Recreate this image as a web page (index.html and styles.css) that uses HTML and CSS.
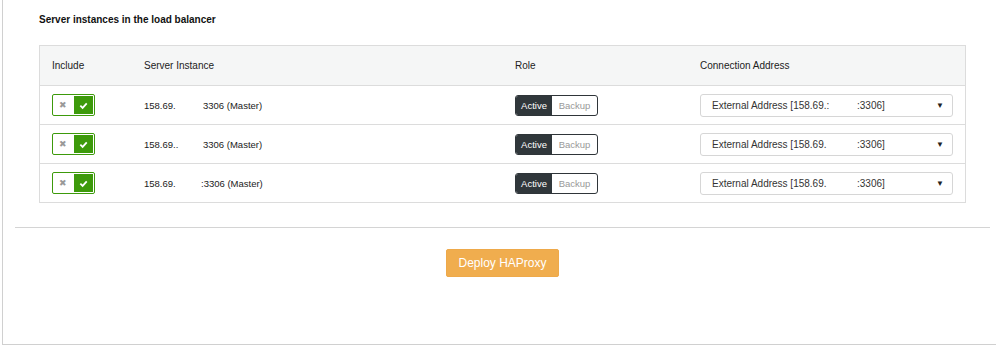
FILE: index.html
```html
<!DOCTYPE html>
<html>
<head>
<meta charset="utf-8">
<link rel="stylesheet" href="styles.css">
</head>
<body>
<div class="panel">
  <div class="section">
    <h4 class="title">Server instances in the load balancer</h4>
    <table class="grid">
      <thead>
        <tr>
          <th class="c1">Include</th>
          <th class="c2">Server Instance</th>
          <th class="c3">Role</th>
          <th class="c4">Connection Address</th>
        </tr>
      </thead>
      <tbody>
        <tr>
          <td><div class="sw"><span class="off">✖</span><span class="on"><svg viewBox="0 0 10 10" width="9" height="9"><path d="M1.5 5.2 L4 7.6 L8.6 2.6" fill="none" stroke="#fff" stroke-width="2"/></svg></span></div></td>
          <td><span class="ip">158.69.</span><span>3306 (Master)</span></td>
          <td><div class="role"><span class="act">Active</span><span class="bak">Backup</span></div></td>
          <td><div class="sel"><span class="a1">External Address [158.69.:</span><span>:3306]</span><span class="arr">▼</span></div></td>
        </tr>
        <tr>
          <td><div class="sw"><span class="off">✖</span><span class="on"><svg viewBox="0 0 10 10" width="9" height="9"><path d="M1.5 5.2 L4 7.6 L8.6 2.6" fill="none" stroke="#fff" stroke-width="2"/></svg></span></div></td>
          <td><span class="ip">158.69..</span><span>3306 (Master)</span></td>
          <td><div class="role"><span class="act">Active</span><span class="bak">Backup</span></div></td>
          <td><div class="sel"><span class="a1">External Address [158.69.</span><span>:3306]</span><span class="arr">▼</span></div></td>
        </tr>
        <tr>
          <td><div class="sw"><span class="off">✖</span><span class="on"><svg viewBox="0 0 10 10" width="9" height="9"><path d="M1.5 5.2 L4 7.6 L8.6 2.6" fill="none" stroke="#fff" stroke-width="2"/></svg></span></div></td>
          <td><span class="ip ip3">158.69.</span><span>:3306 (Master)</span></td>
          <td><div class="role"><span class="act">Active</span><span class="bak">Backup</span></div></td>
          <td><div class="sel"><span class="a1">External Address [158.69.</span><span>:3306]</span><span class="arr">▼</span></div></td>
        </tr>
      </tbody>
    </table>
  </div>
  <hr class="rule">
  <div class="actions">
    <button class="deploy">Deploy HAProxy</button>
  </div>
</div>
</body>
</html>
```

FILE: styles.css
```css
html, body {
  margin: 0;
  padding: 0;
  background: #fff;
  font-family: "Liberation Sans", Arial, sans-serif;
  color: #222;
}
.panel {
  margin-left: 2px;
  height: 344px;
  border-left: 1px solid #d0d0d0;
  border-bottom: 1px solid #d0d0d0;
  box-sizing: content-box;
}
.section {
  padding: 14px 30px 0 36px;
}
.title {
  margin: 0 0 19px 0;
  font-size: 10px;
  font-weight: bold;
  line-height: 12px;
  color: #111;
}
.grid {
  width: 927px;
  border-collapse: collapse;
  border: 1px solid #dcdcdc;
  font-size: 10px;
}
.grid th {
  background: #f5f6f6;
  font-weight: normal;
  text-align: left;
  height: 39px;
  padding: 0 0 0 12px;
  color: #222;
  border-bottom: 1px solid #dcdcdc;
}
.grid td {
  height: 38px;
  padding: 0 0 0 12px;
  border-bottom: 1px solid #dcdcdc;
  font-size: 9.5px;
  color: #222;
}
.c1 { width: 80px; }
.c2 { width: 359px; }
.c3 { width: 173px; }
.sw {
  display: flex;
  width: 41px;
  height: 20px;
  border: 1px solid #3d9a0b;
  border-radius: 2px;
}
.sw .off {
  width: 20px;
  display: flex;
  align-items: center;
  justify-content: center;
  color: #999;
  font-size: 9px;
}
.sw .on {
  flex: 1;
  margin: 1px;
  background: #3d9a0b;
  display: flex;
  align-items: center;
  justify-content: center;
}
.ip {
  display: inline-block;
  width: 59px;
}
.ip3 { width: 57px; }
.role {
  display: flex;
  width: 81px;
  height: 19px;
  border: 1px solid #2f3539;
  border-radius: 3px;
  box-sizing: content-box;
  overflow: hidden;
  font-size: 9.5px;
}
.role .act {
  width: 36px;
  background: #30373b;
  color: #fff;
  display: flex;
  align-items: center;
  justify-content: center;
}
.role .bak {
  flex: 1;
  color: #999;
  display: flex;
  align-items: center;
  justify-content: center;
}
.sel {
  display: flex;
  align-items: center;
  width: 253px;
  height: 23px;
  border: 1px solid #d6d6d6;
  border-radius: 3px;
  padding-left: 11px;
  box-sizing: border-box;
  font-size: 10px;
  color: #333;
}
.sel .a1 {
  width: 145px;
}
.sel .arr {
  margin-left: auto;
  margin-right: 8px;
  font-size: 8px;
  color: #222;
}
.rule {
  margin: 24px 6px 0 12px;
  border: 0;
  border-top: 1px solid #d4d4d4;
  height: 0;
}
.actions {
  display: flex;
  justify-content: center;
  padding: 21px 0 0 6px;
}
.deploy {
  background: #f0ad4e;
  color: #fff;
  border: 1px solid #eea94a;
  border-radius: 2px;
  font-family: "Liberation Sans", Arial, sans-serif;
  font-size: 12px;
  height: 28px;
  padding: 0 11px;
}
```
